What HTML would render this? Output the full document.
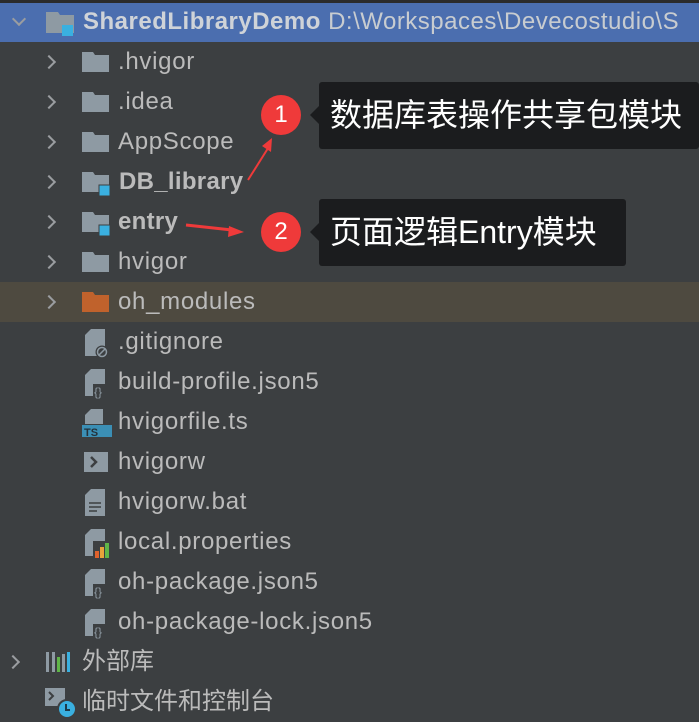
<!DOCTYPE html>
<html><head><meta charset="utf-8"><style>
*{margin:0;padding:0;box-sizing:border-box}
body{width:699px;height:720px;background:#3c3f41;position:relative;overflow:hidden;font-family:"Liberation Sans","Noto Sans CJK SC",sans-serif;color:#bbbbbb}
.row{position:absolute;left:0;width:699px;height:40px}
.t{position:absolute;top:5px;font-size:24px;letter-spacing:0.7px;line-height:30px;white-space:nowrap}
.chev{position:absolute;top:15px;width:10px;height:10px;border-right:2px solid #9a9da0;border-bottom:2px solid #9a9da0;transform:rotate(-45deg)}
.ic{position:absolute;top:6px}
.box{position:absolute;background:#1b1c1e;border-radius:3px;color:#fff;font-size:32px;line-height:66px;padding-left:11px;white-space:nowrap}
.box::before{content:"";position:absolute;left:-9px;top:24px;border:9px solid transparent;border-left:0;border-right-color:#1b1c1e}
.c{position:absolute;width:40px;height:40px;border-radius:50%;background:#ef3a3a;color:#fff;font-size:24px;line-height:40px;text-align:center}
</style></head><body>
<div style="position:absolute;left:0;top:0;width:699px;height:3px;background:#2b2b2b"></div>
<div class="row" style="top:3px;height:39px;background:#4b6eaf">
 <div class="chev" style="left:14px;top:11px;transform:rotate(45deg)"></div>
 <svg class="ic" style="left:46px;top:6px" width="30" height="28"><path d="M0 3h12l2 3h14v18H0z" fill="#8e9aa3"/><rect x="16" y="16" width="11" height="11" fill="#3ab0e0"/></svg>
 <div class="t" style="left:83px;top:4px;font-weight:bold;color:#cfd3d8;letter-spacing:0.5px">SharedLibraryDemo <span style="font-weight:normal;color:#c8ccd0">D:\Workspaces\Devecostudio\S</span></div>
</div>
<div class="row" style="top:282px;background:#4e4a40"></div>

<div class="row" style="top:42px"><div class="chev" style="left:44px"></div><svg class="ic" style="left:82px;top:10px" width="28" height="22"><path d="M0 0h11l2 3h14v17H0z" fill="#8e9aa3"/></svg><div class="t" style="left:118px">.hvigor</div></div>
<div class="row" style="top:82px"><div class="chev" style="left:44px"></div><svg class="ic" style="left:82px;top:10px" width="28" height="22"><path d="M0 0h11l2 3h14v17H0z" fill="#8e9aa3"/></svg><div class="t" style="left:118px">.idea</div></div>
<div class="row" style="top:122px"><div class="chev" style="left:44px"></div><svg class="ic" style="left:82px;top:10px" width="28" height="22"><path d="M0 0h11l2 3h14v17H0z" fill="#8e9aa3"/></svg><div class="t" style="left:118px">AppScope</div></div>
<div class="row" style="top:162px"><div class="chev" style="left:44px"></div><svg class="ic" style="left:82px;top:8px" width="30" height="26"><path d="M0 2h11l2 3h14v17H0z" fill="#8e9aa3"/><rect x="17" y="15" width="11" height="11" fill="#3ab0e0" stroke="#3c3f41" stroke-width="1"/></svg><div class="t" style="left:119px;font-weight:bold;letter-spacing:0.3px">DB_library</div></div>
<div class="row" style="top:202px"><div class="chev" style="left:44px"></div><svg class="ic" style="left:82px;top:8px" width="30" height="26"><path d="M0 2h11l2 3h14v17H0z" fill="#8e9aa3"/><rect x="17" y="15" width="11" height="11" fill="#3ab0e0" stroke="#3c3f41" stroke-width="1"/></svg><div class="t" style="left:118px;font-weight:bold;letter-spacing:0.3px">entry</div></div>
<div class="row" style="top:242px"><div class="chev" style="left:44px"></div><svg class="ic" style="left:82px;top:10px" width="28" height="22"><path d="M0 0h11l2 3h14v17H0z" fill="#8e9aa3"/></svg><div class="t" style="left:118px">hvigor</div></div>
<div class="row" style="top:282px"><div class="chev" style="left:44px"></div><svg class="ic" style="left:82px;top:10px" width="28" height="22"><path d="M0 0h11l2 3h14v17H0z" fill="#c0622c"/></svg><div class="t" style="left:118px">oh_modules</div></div>

<div class="row" style="top:322px"><svg class="ic" style="left:85px;top:7px" width="26" height="30"><path d="M6 0h14v27H0V6z" fill="#8e9aa3"/><circle cx="17" cy="23" r="6.5" fill="#3c3f41"/><circle cx="17" cy="23" r="4.5" fill="none" stroke="#8e9aa3" stroke-width="1.5"/><path d="M14 26l6-6" stroke="#8e9aa3" stroke-width="1.5"/></svg><div class="t" style="left:118px">.gitignore</div></div>
<div class="row" style="top:362px"><svg class="ic" style="left:85px;top:7px" width="28" height="30"><path d="M6 0h14v27H0V6z" fill="#8e9aa3"/><rect x="8" y="15" width="16" height="14" fill="#3c3f41"/><text x="9" y="27" font-size="12" fill="#8e9aa3" font-family="Liberation Sans">{}</text></svg><div class="t" style="left:118px">build-profile.json5</div></div>
<div class="row" style="top:402px"><svg class="ic" style="left:82px;top:7px" width="30" height="30"><path d="M9 0h12v15H3V6z" fill="#8e9aa3"/><rect x="0" y="16" width="30" height="12" fill="#3b8fb5"/><text x="2" y="27" font-size="11" font-weight="bold" fill="#25323b" font-family="Liberation Sans">TS</text></svg><div class="t" style="left:118px">hvigorfile.ts</div></div>
<div class="row" style="top:442px"><svg class="ic" style="left:84px;top:10px" width="26" height="22"><rect width="24" height="20" fill="#8e9aa3"/><path d="M7 5l5 5-5 5" stroke="#3c3f41" stroke-width="2.5" fill="none"/></svg><div class="t" style="left:118px">hvigorw</div></div>
<div class="row" style="top:482px"><svg class="ic" style="left:85px;top:7px" width="26" height="30"><path d="M6 0h14v27H0V6z" fill="#8e9aa3"/><path d="M4 14h12M4 18h12M4 22h8" stroke="#3c3f41" stroke-width="1.5"/></svg><div class="t" style="left:118px">hvigorw.bat</div></div>
<div class="row" style="top:522px"><svg class="ic" style="left:85px;top:7px" width="28" height="30"><path d="M6 0h14v27H0V6z" fill="#8e9aa3"/><rect x="8" y="12" width="18" height="18" fill="#3c3f41"/><rect x="10" y="22" width="4" height="7" fill="#e0622c"/><rect x="15" y="18" width="4" height="11" fill="#e8a33a"/><rect x="20" y="14" width="4" height="15" fill="#5fb548"/></svg><div class="t" style="left:118px">local.properties</div></div>
<div class="row" style="top:562px"><svg class="ic" style="left:85px;top:7px" width="28" height="30"><path d="M6 0h14v27H0V6z" fill="#8e9aa3"/><rect x="8" y="15" width="16" height="14" fill="#3c3f41"/><text x="9" y="27" font-size="12" fill="#8e9aa3" font-family="Liberation Sans">{}</text></svg><div class="t" style="left:118px">oh-package.json5</div></div>
<div class="row" style="top:602px"><svg class="ic" style="left:85px;top:7px" width="28" height="30"><path d="M6 0h14v27H0V6z" fill="#8e9aa3"/><rect x="8" y="15" width="16" height="14" fill="#3c3f41"/><text x="9" y="27" font-size="12" fill="#8e9aa3" font-family="Liberation Sans">{}</text></svg><div class="t" style="left:118px">oh-package-lock.json5</div></div>
<div class="row" style="top:642px"><div class="chev" style="left:8px"></div><svg class="ic" style="left:46px;top:10px" width="28" height="22"><rect x="0" y="0" width="3" height="20" fill="#8e9aa3"/><rect x="6" y="0" width="3" height="20" fill="#8e9aa3"/><rect x="11" y="5" width="3" height="15" fill="#5fb548"/><rect x="16" y="2" width="3" height="18" fill="#8e9aa3"/><rect x="21" y="0" width="3" height="20" fill="#3ab0e0"/></svg><div class="t" style="left:82px;letter-spacing:0">外部库</div></div>
<div class="row" style="top:682px"><svg class="ic" style="left:45px;top:6px" width="32" height="32"><rect x="0" y="0" width="20" height="18" fill="#8e9aa3"/><path d="M4 4l4 4-4 4" stroke="#3c3f41" stroke-width="2" fill="none"/><circle cx="22" cy="21" r="9" fill="#3ab0e0" stroke="#3c3f41" stroke-width="2"/><path d="M21 16v6h4" stroke="#1d3a4a" stroke-width="2" fill="none"/></svg><div class="t" style="left:82px;letter-spacing:0">临时文件和控制台</div></div>

<svg style="position:absolute;left:0;top:0" width="699" height="720">
 <path d="M248 180L270 145" stroke="#ef3a3a" stroke-width="2"/><path d="M272 138l-1 14-9-6z" fill="#ef3a3a"/>
 <path d="M186 225L232 230" stroke="#ef3a3a" stroke-width="3"/><path d="M244 232l-16 5 1-11z" fill="#ef3a3a"/>
</svg>
<div class="c" style="left:261px;top:95px">1</div>
<div class="c" style="left:261px;top:212px">2</div>
<div class="box" style="left:319px;top:82px;width:380px;height:67px">数据库表操作共享包模块</div>
<div class="box" style="left:319px;top:199px;width:307px;height:67px">页面逻辑Entry模块</div>
</body></html>
